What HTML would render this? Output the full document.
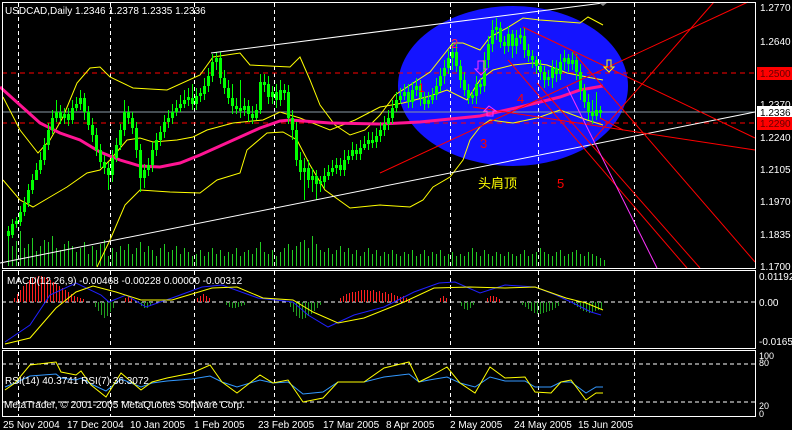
<!DOCTYPE html>
<html><head><meta charset="utf-8">
<style>
html,body{margin:0;padding:0;background:#000;width:792px;height:430px;overflow:hidden}
svg{display:block}
text{font-family:"Liberation Sans","Noto Sans CJK SC",sans-serif;font-size:10px}
</style></head>
<body>
<svg width="792" height="430" viewBox="0 0 792 430" xmlns="http://www.w3.org/2000/svg">
<rect width="792" height="430" fill="#000"/>
<ellipse cx="513" cy="86" rx="115" ry="80" fill="#1414ff"/>
<!-- grid -->
<g stroke="#fff" stroke-dasharray="4,3">
<path d="M18.5 3V268M110.5 3V268M194.5 3V268M274.5 3V268M450.5 3V268M538.5 3V268M634.5 3V268M18.5 271V348M110.5 271V348M194.5 271V348M274.5 271V348M450.5 271V348M538.5 271V348M634.5 271V348M18.5 351V416M110.5 351V416M194.5 351V416M274.5 351V416M450.5 351V416M538.5 351V416M634.5 351V416"/>
</g>
<line x1="2" y1="73" x2="756" y2="73" stroke="#f00" stroke-dasharray="5,4"/>
<line x1="2" y1="123" x2="756" y2="123" stroke="#f00" stroke-dasharray="5,4"/>
<line x1="2" y1="112" x2="756" y2="112" stroke="#8a9aa6"/>
<!-- volume -->
<path stroke="#22cc22" d="M8.5 266v-30M12.5 266v-20M16.5 266v-25M20.5 266v-35M24.5 266v-18M28.5 266v-22M32.5 266v-28M36.5 266v-15M40.5 266v-20M44.5 266v-26M48.5 266v-24M52.5 266v-30M56.5 266v-18M60.5 266v-16M64.5 266v-22M68.5 266v-25M72.5 266v-20M76.5 266v-14M80.5 266v-18M84.5 266v-24M88.5 266v-12M92.5 266v-20M96.5 266v-16M100.5 266v-22M104.5 266v-26M108.5 266v-10M112.5 266v-18M116.5 266v-14M120.5 266v-20M124.5 266v-16M128.5 266v-22M132.5 266v-12M136.5 266v-18M140.5 266v-24M144.5 266v-14M148.5 266v-20M152.5 266v-16M156.5 266v-10M160.5 266v-18M164.5 266v-22M168.5 266v-14M172.5 266v-16M176.5 266v-20M180.5 266v-12M184.5 266v-18M188.5 266v-14M192.5 266v-10M196.5 266v-12M200.5 266v-16M204.5 266v-10M208.5 266v-14M212.5 266v-18M216.5 266v-12M220.5 266v-16M224.5 266v-10M228.5 266v-14M232.5 266v-12M236.5 266v-18M240.5 266v-10M244.5 266v-14M248.5 266v-16M252.5 266v-12M256.5 266v-18M260.5 266v-24M264.5 266v-14M268.5 266v-12M272.5 266v-16M276.5 266v-10M280.5 266v-14M284.5 266v-18M288.5 266v-22M292.5 266v-16M296.5 266v-20M300.5 266v-24M304.5 266v-26M308.5 266v-18M312.5 266v-30M316.5 266v-22M320.5 266v-16M324.5 266v-14M328.5 266v-18M332.5 266v-12M336.5 266v-16M340.5 266v-20M344.5 266v-14M348.5 266v-18M352.5 266v-12M356.5 266v-16M360.5 266v-10M364.5 266v-14M368.5 266v-18M372.5 266v-12M376.5 266v-16M380.5 266v-10M384.5 266v-14M388.5 266v-12M392.5 266v-16M396.5 266v-12M400.5 266v-10M404.5 266v-14M408.5 266v-12M412.5 266v-16M416.5 266v-10M420.5 266v-12M424.5 266v-16M428.5 266v-10M432.5 266v-14M436.5 266v-12M440.5 266v-16M444.5 266v-10M448.5 266v-12M452.5 266v-14M456.5 266v-10M460.5 266v-12M464.5 266v-10M468.5 266v-14M472.5 266v-18M476.5 266v-14M480.5 266v-10M484.5 266v-16M488.5 266v-12M492.5 266v-10M496.5 266v-14M500.5 266v-12M504.5 266v-10M508.5 266v-14M512.5 266v-12M516.5 266v-10M520.5 266v-12M524.5 266v-16M528.5 266v-10M532.5 266v-12M536.5 266v-14M540.5 266v-18M544.5 266v-14M548.5 266v-12M552.5 266v-10M556.5 266v-14M560.5 266v-16M564.5 266v-10M568.5 266v-12M572.5 266v-14M576.5 266v-16M580.5 266v-12M584.5 266v-10M588.5 266v-14M592.5 266v-12M596.5 266v-10M600.5 266v-8M604.5 266v-6"/>
<!-- bands -->
<g fill="none" stroke="#ffff00">
<polyline points="3,97 20,130 38,153 50,140 63,117 77,83 90,68 100,67 110,77 133,88 167,90 200,75 213,57 240,53 250,65 290,67 300,57 310,80 320,105 335,125 350,135 365,130 380,115 395,95 430,72 453,43 463,43 480,50 490,37 507,28 523,18 540,20 567,22 580,23 588,17 603,25"/>
<polyline points="3,180 20,200 33,207 50,197 67,187 87,173 100,170 110,160 127,140 140,138 153,142 177,140 193,137 207,130 233,123 263,120 280,112 300,118 330,130 355,120 380,107 403,103 430,96 447,90 467,100 480,80 493,70 513,65 533,63 547,65 567,73 587,77 603,80"/>
<polyline points="97,267 110,240 125,205 140,190 170,192 200,193 217,180 240,173 247,150 267,133 283,132 297,140 310,165 325,190 350,208 380,205 410,207 423,200 433,187 450,177 463,160 470,140 480,127 490,120 513,123 537,118 560,110 587,120 603,125"/>
</g>
<polyline fill="none" stroke="#ff1493" stroke-width="3" points="0,87 20,105 40,123 60,133 80,140 100,152 120,160 140,166 160,167 180,163 200,155 220,146 240,137 260,128 280,121 290,120 330,123 380,124 420,122 480,116 520,107 560,97 580,90 603,86"/>
<!-- candles -->
<path fill="none" stroke="#00ff00" stroke-width="1" d="M8.5 226V241M12.5 219V238M16.5 217V228M20.5 206V226M24.5 197V216M28.5 184V207M32.5 174V194M36.5 163V175M40.5 152V174M44.5 138V165M48.5 123V150M52.5 110V134M56.5 100V122M60.5 105V124M64.5 108V124M68.5 108V126M72.5 100V124M76.5 97V111M80.5 90V110M84.5 93V120M88.5 106V130M92.5 118V142M96.5 128V156M100.5 144V168M104.5 155V174M108.5 162V190M112.5 150V182M116.5 138V162M120.5 124V150M124.5 100V136M128.5 106V124M132.5 112V134M136.5 122V158M140.5 144V192M144.5 164V188M148.5 158V176M152.5 142V172M156.5 133V156M160.5 126V146M164.5 115V138M168.5 110V128M172.5 104V124M176.5 100V116M180.5 95V112M184.5 90V108M188.5 88V106M192.5 84V110M196.5 88V110M200.5 88V102M204.5 78V100M208.5 68V92M212.5 54V82M216.5 52V70M220.5 52V84M224.5 70V94M228.5 80V104M232.5 84V114M236.5 98V114M240.5 80V118M244.5 98V116M248.5 100V122M252.5 106V124M256.5 104V120M260.5 74V114M264.5 74V92M268.5 76V104M272.5 86V104M276.5 84V108M280.5 80V106M284.5 84V100M288.5 85V124M292.5 110V140M296.5 122V166M300.5 152V180M304.5 158V200M308.5 160V188M312.5 168V192M316.5 170V200M320.5 176V192M324.5 168V188M328.5 165V180M332.5 160V176M336.5 158V174M340.5 158V176M344.5 150V176M348.5 150V164M352.5 142V160M356.5 144V160M360.5 140V160M364.5 136V150M368.5 132V150M372.5 132V148M376.5 128V148M380.5 122V142M384.5 116V136M388.5 110V130M392.5 100V124M396.5 92V112M400.5 88V104M404.5 84V100M408.5 84V108M412.5 82V108M416.5 78V96M420.5 80V106M424.5 92V110M428.5 92V108M432.5 88V104M436.5 78V100M440.5 68V92M444.5 60V84M448.5 50V74M452.5 44V70M456.5 44V72M460.5 60V88M464.5 72V96M468.5 84V104M472.5 90V104M476.5 76V104M480.5 78V94M484.5 52V92M488.5 36V68M492.5 20V52M496.5 18V40M500.5 22V48M504.5 36V54M508.5 26V52M512.5 30V58M516.5 30V54M520.5 28V44M524.5 28V58M528.5 44V62M532.5 50V68M536.5 56V74M540.5 60V80M544.5 66V88M548.5 70V86M552.5 60V88M556.5 60V82M560.5 54V80M564.5 50V70M568.5 54V72M572.5 52V70M576.5 54V80M580.5 64V100M584.5 84V108M588.5 94V120M592.5 100V124M596.5 92V120M600.5 106V118"/>
<path fill="none" stroke="#00ff00" stroke-width="3" d="M8.5 231V236M12.5 235V224M16.5 224V221M20.5 222V212M24.5 212V203M28.5 203V190M32.5 190V180M36.5 180V170M40.5 170V160M44.5 160V145M48.5 145V130M52.5 130V118M56.5 118V112M60.5 112V118M64.5 118V114M68.5 114V120M72.5 120V108M76.5 108V104M80.5 104V98M84.5 98V112M88.5 112V125M92.5 125V135M96.5 135V150M100.5 150V162M104.5 162V168M108.5 168V175M112.5 175V158M116.5 158V145M120.5 145V130M124.5 130V112M128.5 112V118M132.5 118V128M136.5 128V150M140.5 150V178M144.5 178V170M148.5 170V165M152.5 165V150M156.5 150V140M160.5 140V132M164.5 132V122M168.5 122V118M172.5 118V112M176.5 112V108M180.5 108V104M184.5 104V100M188.5 100V97M192.5 98V104M196.5 104V96M200.5 96V93M204.5 94V86M208.5 86V76M212.5 76V62M216.5 62V58M220.5 58V78M224.5 78V88M228.5 88V98M232.5 98V106M236.5 106V109M240.5 108V111M244.5 110V106M248.5 106V114M252.5 114V118M256.5 118V110M260.5 110V82M264.5 82V85M268.5 84V97M272.5 97V92M276.5 92V100M280.5 100V90M284.5 90V93M288.5 92V118M292.5 118V130M296.5 130V160M300.5 160V172M304.5 172V168M308.5 168V180M312.5 180V176M316.5 176V184M320.5 184V181M324.5 182V176M328.5 176V172M332.5 172V168M336.5 168V165M340.5 165V170M344.5 170V160M348.5 160V156M352.5 156V150M356.5 150V154M360.5 154V148M364.5 148V144M368.5 144V140M372.5 140V143M376.5 142V136M380.5 136V130M384.5 130V124M388.5 124V118M392.5 118V108M396.5 108V100M400.5 100V96M404.5 96V92M408.5 92V102M412.5 102V90M416.5 90V86M420.5 86V98M424.5 98V104M428.5 104V100M432.5 100V95M436.5 95V86M440.5 86V76M444.5 76V68M448.5 68V58M452.5 58V52M456.5 52V66M460.5 66V80M464.5 80V90M468.5 90V98M472.5 98V95M476.5 96V84M480.5 84V87M484.5 86V60M488.5 60V44M492.5 44V30M496.5 30V27M500.5 28V42M504.5 42V46M508.5 46V34M512.5 34V46M516.5 46V38M520.5 38V35M524.5 36V50M528.5 50V56M532.5 56V60M536.5 60V66M540.5 66V72M544.5 72V80M548.5 80V77M552.5 78V68M556.5 68V74M560.5 74V62M564.5 62V58M568.5 58V64M572.5 64V60M576.5 60V72M580.5 72V90M584.5 90V102M588.5 102V112M592.5 112V116M596.5 116V110M600.5 110V113"/>
<!-- trend lines -->
<line x1="0" y1="263" x2="755" y2="112" stroke="#fff"/>
<line x1="211" y1="53" x2="603" y2="3" stroke="#fff"/>
<g stroke="#f00" fill="none">
<line x1="380" y1="173" x2="748" y2="2"/>
<line x1="593" y1="140" x2="714" y2="2"/>
<line x1="523" y1="27" x2="755" y2="138"/>
<line x1="473" y1="107" x2="755" y2="150"/>
<line x1="508" y1="60" x2="687" y2="268"/>
<line x1="573" y1="52" x2="755" y2="262"/>
<line x1="537" y1="83" x2="700" y2="268"/>
<line x1="600" y1="118" x2="623" y2="130"/>
</g>
<line x1="567" y1="87" x2="657" y2="268" stroke="#ff33ff"/>
<polygon points="598,2 608,2 603,6" fill="#888"/>
<!-- labels in chart -->
<text x="478" y="188" fill="#ffff00" font-size="13" style="font-size:13px">头肩顶</text>
<text x="557" y="188" fill="#f00" style="font-size:13px">5</text>
<text x="517" y="103" fill="#f00" style="font-size:13px">4</text>
<text x="480" y="148" fill="#f00" style="font-size:13px">3</text>
<text x="451" y="48" fill="#ff2255" style="font-size:13px">2</text>
<text x="418" y="92" fill="#f00" style="font-size:12px">1</text>
<path d="M478,61 v8 h-3 l6,6 l6,-6 h-3 v-8 z" fill="none" stroke="#ff33ff"/>
<path d="M489,106 l-5,5 h3 v5 h6 v-5 h3 z" fill="none" stroke="#ff33ff"/>
<path d="M607,60 v7 h-3 l5,5 l5,-5 h-3 v-7 z" fill="none" stroke="#ffff00"/>
<text x="5" y="14" fill="#fff">USDCAD,Daily  1.2346 1.2378 1.2335 1.2336</text>
<!-- frames -->
<rect x="2.5" y="2.5" width="753" height="266" fill="none" stroke="#fff"/>
<rect x="2.5" y="270.5" width="753" height="78" fill="none" stroke="#fff"/>
<rect x="2.5" y="350.5" width="753" height="66" fill="none" stroke="#fff"/>
<g fill="#fff">
<text x="760" y="11">1.2770</text><text x="760" y="45">1.2640</text><text x="760" y="108">1.2370</text><text x="760" y="141">1.2240</text><text x="760" y="173">1.2105</text><text x="760" y="205">1.1970</text><text x="760" y="238">1.1835</text><text x="760" y="270">1.1700</text>
</g>
<rect x="757" y="67" width="35" height="13" fill="#f00"/><text x="760" y="77" fill="#600">1.2500</text>
<rect x="757" y="106" width="35" height="13" fill="#fff"/><text x="760" y="116" fill="#000">1.2336</text>
<rect x="757" y="117" width="35" height="13" fill="#f00"/><text x="760" y="127" fill="#600">1.2290</text>
<!-- MACD -->
<line x1="2" y1="302" x2="756" y2="302" stroke="#fff" stroke-dasharray="4,3"/>
<path stroke="#ff2020" d="M14.5 302v-4M17.5 302v-8M20.5 302v-12M23.5 302v-16M26.5 302v-19M29.5 302v-22M32.5 302v-24M35.5 302v-25M38.5 302v-26M41.5 302v-26M44.5 302v-25M47.5 302v-24M50.5 302v-22M53.5 302v-20M56.5 302v-18M59.5 302v-16M62.5 302v-14M65.5 302v-12M68.5 302v-10M71.5 302v-8M74.5 302v-6M77.5 302v-5M80.5 302v-4M83.5 302v-3M125.5 302v-4M128.5 302v-5M131.5 302v-4M197.5 302v-4M200.5 302v-6M203.5 302v-8M206.5 302v-6M209.5 302v-4M340.5 302v-4M343.5 302v-6M346.5 302v-8M349.5 302v-9M352.5 302v-10M355.5 302v-10M358.5 302v-11M361.5 302v-12M364.5 302v-12M367.5 302v-12M370.5 302v-11M373.5 302v-12M376.5 302v-10M379.5 302v-11M382.5 302v-9M385.5 302v-10M388.5 302v-8M391.5 302v-9M394.5 302v-7M397.5 302v-6M400.5 302v-5M403.5 302v-6M406.5 302v-4M409.5 302v-3M440.5 302v-4M443.5 302v-6M446.5 302v-4M487.5 302v-4M490.5 302v-6M493.5 302v-6M496.5 302v-5M499.5 302v-3"/>
<path stroke="#20a020" d="M95.5 302v5M98.5 302v9M101.5 302v13M104.5 302v16M107.5 302v14M110.5 302v10M113.5 302v6M141.5 302v4M144.5 302v6M147.5 302v6M150.5 302v4M226.5 302v3M229.5 302v5M232.5 302v6M235.5 302v6M238.5 302v5M241.5 302v4M244.5 302v3M290.5 302v5M293.5 302v10M296.5 302v14M299.5 302v16M302.5 302v17M305.5 302v16M308.5 302v14M311.5 302v12M314.5 302v9M317.5 302v6M320.5 302v3M461.5 302v4M464.5 302v7M467.5 302v8M470.5 302v6M473.5 302v3M522.5 302v3M525.5 302v5M528.5 302v7M531.5 302v9M534.5 302v11M537.5 302v12M540.5 302v12M543.5 302v11M546.5 302v10M549.5 302v9M552.5 302v8M555.5 302v6M558.5 302v4M574.5 302v3M577.5 302v5M580.5 302v7M583.5 302v9M586.5 302v10M589.5 302v11M592.5 302v10M595.5 302v9M598.5 302v8M601.5 302v7"/>
<polyline fill="none" stroke="#2020ff" points="5,342 30,325 50,295 76,283 101,295 109,302 126,295 146,307 172,298 202,287 222,285 258,298 293,302 308,315 328,327 354,315 384,307 414,292 439,283 455,282 480,293 505,285 535,287 556,295 571,302 591,312 601,315"/>
<polyline fill="none" stroke="#ffff00" points="5,344 30,338 56,308 76,292 93,286 116,292 141,300 172,300 212,288 237,287 263,298 293,300 313,312 338,323 364,318 404,302 434,288 470,287 505,288 535,287 566,298 586,303 603,310"/>
<text x="7" y="284" fill="#fff">MACD(12,26,9) -0.00468 -0.00228 0.00000 -0.00312</text>
<g fill="#fff"><text x="759" y="280">0.01192</text><text x="759" y="306">0.00</text><text x="759" y="345">-0.01655</text></g>
<!-- RSI -->
<line x1="2" y1="364" x2="756" y2="364" stroke="#fff" stroke-dasharray="4,3"/>
<line x1="2" y1="402" x2="756" y2="402" stroke="#fff" stroke-dasharray="4,3"/>
<polyline fill="none" stroke="#3399ff" points="5,387 15,383 30,376 56,374 61,378 76,380 81,378 91,384 106,391 121,379 141,387 152,383 167,381 192,379 210,376 222,382 237,387 260,380 273,383 288,382 303,394 323,392 338,382 364,382 384,377 409,374 419,382 429,380 447,377 460,383 475,387 490,377 505,381 525,381 535,387 551,387 561,382 571,382 586,393 596,387 603,387"/>
<polyline fill="none" stroke="#ffff00" points="5,390 15,383 30,365 56,362 61,372 76,375 81,371 91,385 106,397 121,373 141,390 152,382 167,378 192,373 210,365 222,382 237,393 260,375 273,383 288,380 303,402 323,398 338,382 364,382 384,368 409,362 419,382 429,377 447,367 460,383 475,393 490,367 505,378 525,377 535,392 551,393 561,382 571,380 586,400 596,393 603,393"/>
<text x="5" y="384" fill="#fff">RSI(14) 40.3741  RSI(7) 36.3072</text>
<text x="4" y="408" fill="#fff">MetaTrader, © 2001-2005 MetaQuotes Software Corp.</text>
<g fill="#fff"><text x="759" y="359" style="font-size:9px">100</text><text x="759" y="366" style="font-size:9px">80</text><text x="759" y="409" style="font-size:9px">20</text><text x="759" y="417" style="font-size:9px">0</text></g>
<g fill="#fff">
<text x="3" y="428">25 Nov 2004</text><text x="67" y="428">17 Dec 2004</text><text x="130" y="428">10 Jan 2005</text><text x="194" y="428">1 Feb 2005</text><text x="258" y="428">23 Feb 2005</text><text x="323" y="428">17 Mar 2005</text><text x="386" y="428">8 Apr 2005</text><text x="450" y="428">2 May 2005</text><text x="514" y="428">24 May 2005</text><text x="578" y="428">15 Jun 2005</text>
</g>
</svg>
</body></html>
